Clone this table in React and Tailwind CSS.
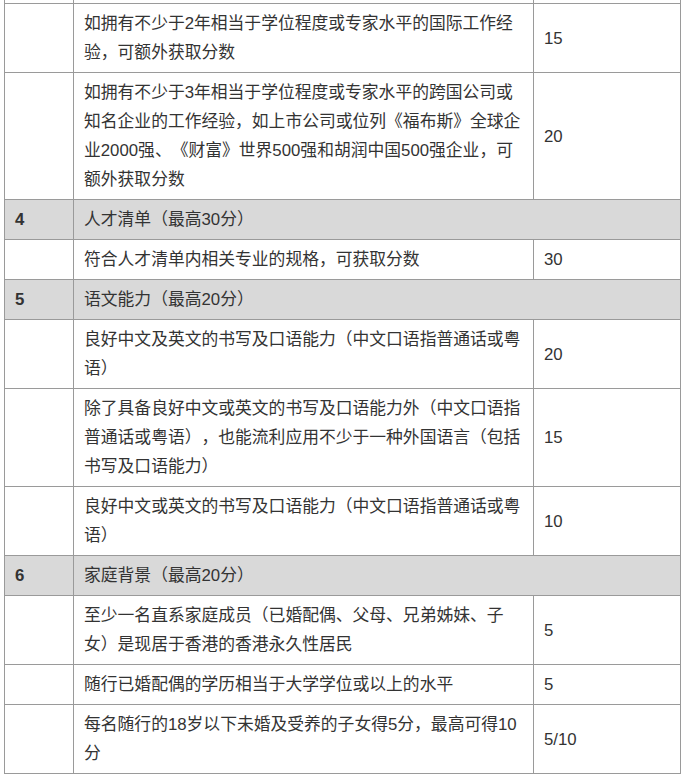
const rows = [
    { text: '如拥有不少于2年相当于学位程度或专家水平的国际工作经验，可额外获取分数', score: '15' },
    { text: '如拥有不少于3年相当于学位程度或专家水平的跨国公司或知名企业的工作经验，如上市公司或位列《福布斯》全球企业2000强、《财富》世界500强和胡润中国500强企业，可额外获取分数', score: '20' },
    { no: '4', text: '人才清单（最高30分）' },
    { text: '符合人才清单内相关专业的规格，可获取分数', score: '30' },
    { no: '5', text: '语文能力（最高20分）' },
    { text: '良好中文及英文的书写及口语能力（中文口语指普通话或粤语）', score: '20' },
    { text: '除了具备良好中文或英文的书写及口语能力外（中文口语指普通话或粤语），也能流利应用不少于一种外国语言（包括书写及口语能力）', score: '15' },
    { text: '良好中文或英文的书写及口语能力（中文口语指普通话或粤语）', score: '10' },
    { no: '6', text: '家庭背景（最高20分）' },
    { text: '至少一名直系家庭成员（已婚配偶、父母、兄弟姊妹、子女）是现居于香港的香港永久性居民', score: '5' },
    { text: '随行已婚配偶的学历相当于大学学位或以上的水平', score: '5' },
    { text: '每名随行的18岁以下未婚及受养的子女得5分，最高可得10分', score: '5/10' },
];

const cell = 'border-r border-b border-[#9a9a9a] px-[10px] py-[5px]';

const App = () => {
    return (
        <div className="min-h-[783px] bg-white pl-[4px] font-['Liberation_Sans','Noto_Sans_CJK_SC',sans-serif] text-[16.8px] leading-[29px] text-[#333] [text-spacing-trim:space-all]">
            <div className="grid w-[677px] grid-cols-[70px_460px_147px]">
                {/* tail of the row above */}
                <div className="h-[4px] border-x border-b border-[#9a9a9a]"></div>
                <div className="h-[4px] border-r border-b border-[#9a9a9a]"></div>
                <div className="h-[4px] border-r border-b border-[#9a9a9a]"></div>

                {rows.map((row, i) =>
                    row.no ? (
                        <div key={i} className="contents">
                            <div className={`${cell} flex items-center border-l bg-[#d9d9d9] font-bold`}>{row.no}</div>
                            <div className={`${cell} col-span-2 flex items-center bg-[#d9d9d9]`}>{row.text}</div>
                        </div>
                    ) : (
                        <div key={i} className="contents">
                            <div className={`${cell} border-l`}></div>
                            <div className={cell}>{row.text}</div>
                            <div className={`${cell} flex items-center`}>{row.score}</div>
                        </div>
                    )
                )}
            </div>
        </div>
    );
};

export default App;
